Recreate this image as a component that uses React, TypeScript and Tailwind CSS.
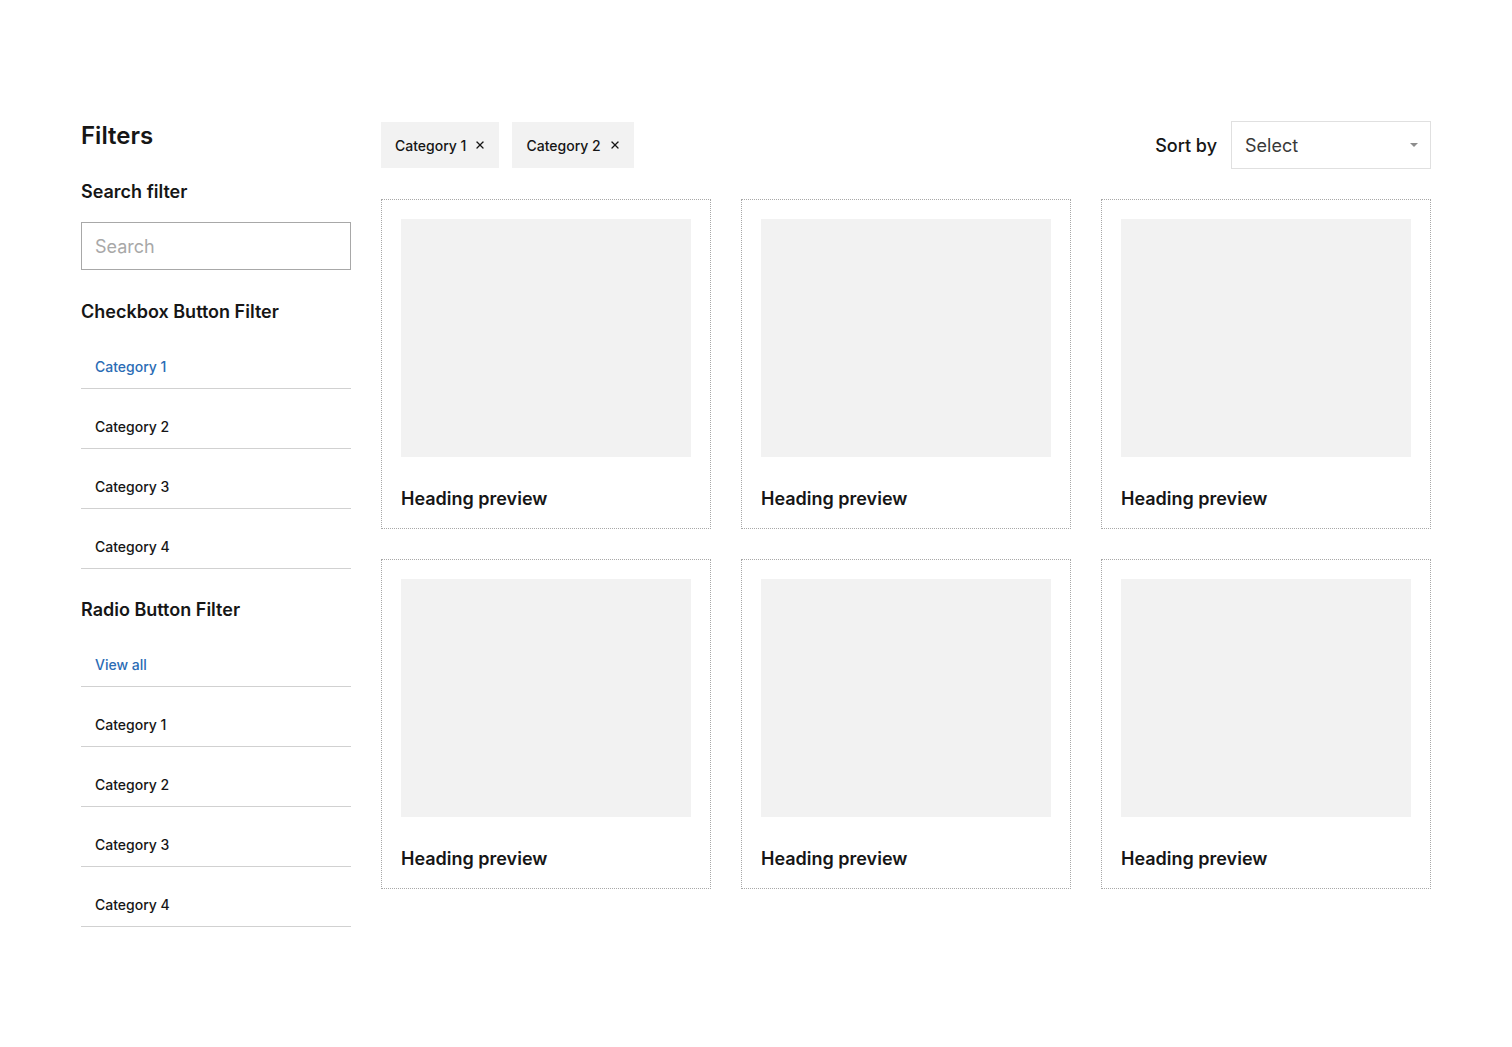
import { X } from 'lucide-react';

const checkboxItems = ['Category 1', 'Category 2', 'Category 3', 'Category 4'];
const radioItems = ['View all', 'Category 1', 'Category 2', 'Category 3', 'Category 4'];

function FilterRow({ label, active }: { label: string; active?: boolean }) {
  return (
    <div className="flex h-[60px] items-end border-b border-[#d1d1d1] pb-[11px] pl-[14px]">
      <span className={`text-[14px] font-medium leading-5 ${active ? 'text-[#2b6cb5]' : 'text-[#161616]'}`}>
        {label}
      </span>
    </div>
  );
}

function Chip({ label }: { label: string }) {
  return (
    <div className="flex h-[46px] items-center gap-[8px] bg-[#f2f2f2] pl-[14px] pr-[13px] text-[14px] font-medium text-[#161616]">
      {label}
      <X size={12} strokeWidth={2.6} />
    </div>
  );
}

function Card() {
  return (
    <div className="flex h-[330px] flex-col border border-dotted border-[#a8a8a8] p-[19px]">
      <div className="h-[238px] shrink-0 bg-[#f2f2f2]"></div>
      <h3 className="mt-[30px] text-[18px] font-semibold leading-6 text-[#161616]">Heading preview</h3>
    </div>
  );
}

export default function App() {
  return (
    <div
      className="flex min-h-screen gap-[30px] bg-white px-[81px] pt-[120px] text-[#161616]"
      style={{ fontFamily: 'Inter, "Noto Sans", sans-serif' }}
    >
      <aside className="w-[270px] shrink-0">
        <h1 className="text-[24px] font-semibold leading-8">Filters</h1>
        <h2 className="mt-[28px] text-[18px] font-semibold leading-6">Search filter</h2>
        <div className="mt-[18px] flex h-[48px] items-center border border-[#a8a8a8] px-[13px] text-[18px] text-[#a8a8a8]">
          Search
        </div>

        <h2 className="mt-[30px] text-[18px] font-semibold leading-6">Checkbox Button Filter</h2>
        <div className="mt-[5px]">
          {checkboxItems.map((c, i) => (
            <FilterRow key={c} label={c} active={i === 0} />
          ))}
        </div>

        <h2 className="mt-[29px] text-[18px] font-semibold leading-6">Radio Button Filter</h2>
        <div className="mt-[5px]">
          {radioItems.map((c, i) => (
            <FilterRow key={c + i} label={c} active={i === 0} />
          ))}
        </div>
      </aside>

      <main className="flex-1">
        <div className="flex h-[50px] items-center justify-between">
          <div className="flex gap-[13px]">
            <Chip label="Category 1" />
            <Chip label="Category 2" />
          </div>
          <div className="flex items-center gap-[14px]">
            <span className="text-[18px] font-medium">Sort by</span>
            <div className="flex h-[48px] w-[200px] items-center justify-between border border-[#e0e0e0] pl-[13px] pr-[12px] text-[18px] text-[#393939]">
              Select
              <svg width="8" height="4" viewBox="0 0 8 4">
                <path d="M0 0h8L4 4z" fill="#8d8d8d" />
              </svg>
            </div>
          </div>
        </div>

        <div className="mt-[29px] grid grid-cols-3 gap-[30px]">
          {Array.from({ length: 6 }).map((_, i) => (
            <Card key={i} />
          ))}
        </div>
      </main>
    </div>
  );
}
